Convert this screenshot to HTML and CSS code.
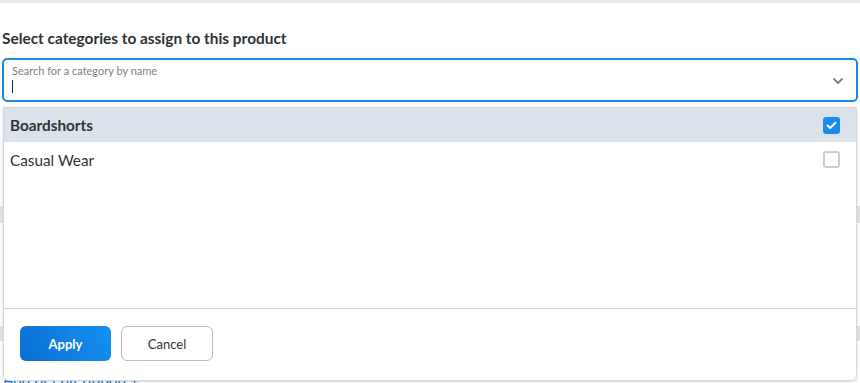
FILE: index.html
```html
<!DOCTYPE html>
<html lang="en">
<head>
<meta charset="utf-8">
<title>Select categories</title>
<link rel="stylesheet" href="styles.css">
</head>
<body>
<div class="page">
  <h2 class="heading">Select categories to assign to this product</h2>
  <div class="combo">
    <div class="field">
      <label class="field-label">Search for a category by name</label>
      <span class="caret"></span>
    </div>
    <svg class="chevron" width="10" height="6" viewBox="0 0 10 6"><path d="M1 1 L5 5 L9 1" fill="none" stroke="#7a7f85" stroke-width="1.8" stroke-linecap="round" stroke-linejoin="round"/></svg>
  </div>
  <div class="behind">
    <div class="gap-a"></div>
    <div class="grey-bar"></div>
    <div class="gap-b"></div>
    <div class="grey-bar grey-bar-2"></div>
    <div class="gap-c"></div>
    <a class="ribbon-link" href="#">Add or edit ribbon +</a>
  </div>

  <div class="panel">
    <ul class="options">
      <li class="option option-selected">
        <span class="option-name">Boardshorts</span>
        <span class="check check-on"><svg width="11" height="9" viewBox="0 0 11 9"><path d="M1.5 4.5 L4.2 7 L9.5 1.8" fill="none" stroke="#fff" stroke-width="2" stroke-linecap="round" stroke-linejoin="round"/></svg></span>
      </li>
      <li class="option">
        <span class="option-name">Casual Wear</span>
        <span class="check"></span>
      </li>
    </ul>
    <div class="footer">
      <button class="btn btn-primary">Apply</button>
      <button class="btn btn-secondary">Cancel</button>
    </div>
  </div>
</div>
</body>
</html>
```
FILE: styles.css
```css
* { box-sizing: border-box; }
html, body { margin: 0; padding: 0; }
body {
  background: #fff;
  font-family: Lato, "Open Sans", Arial, sans-serif;
  color: #333;
  overflow: hidden;
  height: 383px;
}
.page {
  position: relative;
  border-top: 3px solid #e9e9ea;
  padding: 0 2px;
  height: 383px;
}
.heading {
  margin: 0;
  padding-top: 26px;
  font-size: 15.4px;
  line-height: 18px;
  font-weight: 700;
  color: #2f3236;
  height: 55px;
}
.combo {
  position: relative;
  height: 44px;
  border: 2px solid #1a8ae3;
  border-radius: 5px;
  background: #fff;
  display: flex;
  align-items: center;
  justify-content: space-between;
  padding: 0 13px 0 8px;
}
.field {
  display: flex;
  flex-direction: column;
  align-self: flex-start;
  padding-top: 4px;
}
.field-label {
  font-size: 11px;
  line-height: 13px;
  color: #7b7f84;
}
.caret {
  width: 1px;
  height: 13px;
  background: #222;
  margin-top: 3px;
}
.chevron { display: block; margin-top: 2px; }

.gap-a { height: 104px; }
.grey-bar { height: 17px; background: #e3e4e6; margin: 0 -2px; }
.gap-b { height: 103px; }
.grey-bar-2 { height: 15px; }
.gap-c { height: 29px; }
.ribbon-link {
  display: block;
  font-size: 15.4px;
  line-height: 18px;
  color: #1b7fd6;
  text-decoration: none;
  padding-left: 1px;
}

.panel {
  position: absolute;
  top: 104px;
  left: 3px;
  width: 854px;
  height: 274px;
  background: #fff;
  border: 1px solid #d6d8db;
  border-radius: 0 0 6px 6px;
  box-shadow: 0 2px 4px rgba(0,0,0,0.12);
  display: flex;
  flex-direction: column;
}
.options {
  list-style: none;
  margin: 0;
  padding: 0;
  flex: 1;
  border-bottom: 1px solid #cfd1d4;
}
.option {
  display: flex;
  align-items: center;
  justify-content: space-between;
  height: 34px;
  padding: 0 16px 0 6px;
  font-size: 15.3px;
  color: #2f3236;
}
.option + .option { height: 35px; }
.option-selected {
  background: #dae2eb;
  font-weight: 700;
}
.check {
  width: 17px;
  height: 17px;
  border: 2px solid #cbcdd0;
  border-radius: 3px;
  background: #fff;
  display: flex;
  align-items: center;
  justify-content: center;
}
.check-on {
  background: #1a8cf0;
  border-color: #1a8cf0;
}
.footer {
  display: flex;
  gap: 10px;
  padding: 17px 0 0 16px;
  height: 71px;
}
.btn {
  height: 35px;
  width: 92px;
  border-radius: 6px;
  font-family: Lato, "Open Sans", Arial, sans-serif;
  font-size: 13px;
  cursor: pointer;
}
.btn-primary {
  width: 91px;
  border: none;
  color: #fff;
  font-weight: 700;
  background: linear-gradient(60deg, #0a6fd3 0%, #1590ee 100%);
}
.btn-secondary {
  border: 1px solid #b9bcc0;
  background: #fff;
  color: #333;
}
```
